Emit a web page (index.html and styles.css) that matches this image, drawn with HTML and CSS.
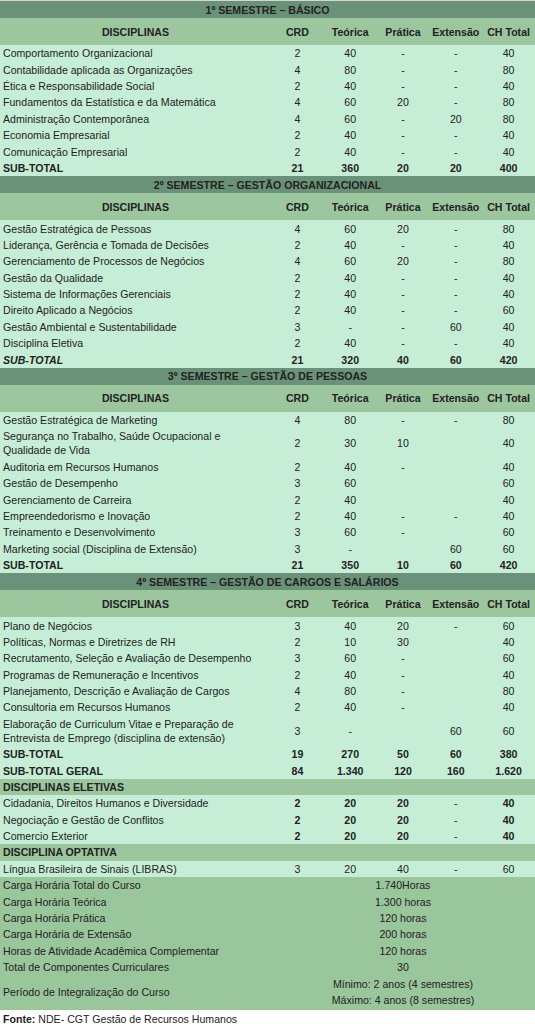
FILE: index.html
```html
<!DOCTYPE html>
<html lang="pt-BR">
<head>
    <meta charset="UTF-8">
    <meta name="viewport" content="width=device-width, initial-scale=1.0">
    <title>Matriz Curricular - Gestão de Recursos Humanos</title>
    <link rel="stylesheet" href="styles.css">
</head>
<body>
    <table class="matriz">
        <colgroup>
            <col class="c-disc">
            <col class="c-num">
            <col class="c-num">
            <col class="c-num">
            <col class="c-num">
            <col class="c-num">
        </colgroup>

        <!-- 1º semestre -->
        <tr class="title"><td colspan="6">1º SEMESTRE – BÁSICO</td></tr>
        <tr class="head"><td>DISCIPLINAS</td><td>CRD</td><td>Teórica</td><td>Prática</td><td>Extensão</td><td>CH Total</td></tr>
        <tr><td>Comportamento Organizacional</td><td>2</td><td>40</td><td>-</td><td>-</td><td>40</td></tr>
        <tr><td>Contabilidade aplicada as Organizações</td><td>4</td><td>80</td><td>-</td><td>-</td><td>80</td></tr>
        <tr><td>Ética e Responsabilidade Social</td><td>2</td><td>40</td><td>-</td><td>-</td><td>40</td></tr>
        <tr><td>Fundamentos da Estatística e da Matemática</td><td>4</td><td>60</td><td>20</td><td>-</td><td>80</td></tr>
        <tr><td>Administração Contemporânea</td><td>4</td><td>60</td><td>-</td><td>20</td><td>80</td></tr>
        <tr><td>Economia Empresarial</td><td>2</td><td>40</td><td>-</td><td>-</td><td>40</td></tr>
        <tr><td>Comunicação Empresarial</td><td>2</td><td>40</td><td>-</td><td>-</td><td>40</td></tr>
        <tr class="sub"><td>SUB-TOTAL</td><td>21</td><td>360</td><td>20</td><td>20</td><td>400</td></tr>

        <!-- 2º semestre -->
        <tr class="title"><td colspan="6">2º SEMESTRE – GESTÃO ORGANIZACIONAL</td></tr>
        <tr class="head"><td>DISCIPLINAS</td><td>CRD</td><td>Teórica</td><td>Prática</td><td>Extensão</td><td>CH Total</td></tr>
        <tr><td>Gestão Estratégica de Pessoas</td><td>4</td><td>60</td><td>20</td><td>-</td><td>80</td></tr>
        <tr><td>Liderança, Gerência e Tomada de Decisões</td><td>2</td><td>40</td><td>-</td><td>-</td><td>40</td></tr>
        <tr><td>Gerenciamento de Processos de Negócios</td><td>4</td><td>60</td><td>20</td><td>-</td><td>80</td></tr>
        <tr><td>Gestão da Qualidade</td><td>2</td><td>40</td><td>-</td><td>-</td><td>40</td></tr>
        <tr><td>Sistema de Informações Gerenciais</td><td>2</td><td>40</td><td>-</td><td>-</td><td>40</td></tr>
        <tr><td>Direito Aplicado a Negócios</td><td>2</td><td>40</td><td>-</td><td>-</td><td>60</td></tr>
        <tr><td>Gestão Ambiental e Sustentabilidade</td><td>3</td><td>-</td><td>-</td><td>60</td><td>40</td></tr>
        <tr><td>Disciplina Eletiva</td><td>2</td><td>40</td><td>-</td><td>-</td><td>40</td></tr>
        <tr class="sub"><td><i>SUB-TOTAL</i></td><td>21</td><td>320</td><td>40</td><td>60</td><td>420</td></tr>

        <!-- 3º semestre -->
        <tr class="title"><td colspan="6">3º SEMESTRE – GESTÃO DE PESSOAS</td></tr>
        <tr class="head"><td>DISCIPLINAS</td><td>CRD</td><td>Teórica</td><td>Prática</td><td>Extensão</td><td>CH Total</td></tr>
        <tr><td>Gestão Estratégica de Marketing</td><td>4</td><td>80</td><td>-</td><td>-</td><td>80</td></tr>
        <tr><td>Segurança no Trabalho, Saúde Ocupacional e<br>Qualidade de Vida</td><td>2</td><td>30</td><td>10</td><td></td><td>40</td></tr>
        <tr><td>Auditoria em Recursos Humanos</td><td>2</td><td>40</td><td>-</td><td></td><td>40</td></tr>
        <tr><td>Gestão de Desempenho</td><td>3</td><td>60</td><td></td><td></td><td>60</td></tr>
        <tr><td>Gerenciamento de Carreira</td><td>2</td><td>40</td><td></td><td></td><td>40</td></tr>
        <tr><td>Empreendedorismo e Inovação</td><td>2</td><td>40</td><td>-</td><td>-</td><td>40</td></tr>
        <tr><td>Treinamento e Desenvolvimento</td><td>3</td><td>60</td><td>-</td><td></td><td>60</td></tr>
        <tr><td>Marketing social (Disciplina de Extensão)</td><td>3</td><td>-</td><td></td><td>60</td><td>60</td></tr>
        <tr class="sub"><td>SUB-TOTAL</td><td>21</td><td>350</td><td>10</td><td>60</td><td>420</td></tr>

        <!-- 4º semestre -->
        <tr class="title"><td colspan="6">4º SEMESTRE – GESTÃO DE CARGOS E SALÁRIOS</td></tr>
        <tr class="head"><td>DISCIPLINAS</td><td>CRD</td><td>Teórica</td><td>Prática</td><td>Extensão</td><td>CH Total</td></tr>
        <tr><td>Plano de Negócios</td><td>3</td><td>40</td><td>20</td><td>-</td><td>60</td></tr>
        <tr><td>Políticas, Normas e Diretrizes de RH</td><td>2</td><td>10</td><td>30</td><td></td><td>40</td></tr>
        <tr><td>Recrutamento, Seleção e Avaliação de Desempenho</td><td>3</td><td>60</td><td>-</td><td></td><td>60</td></tr>
        <tr><td>Programas de Remuneração e Incentivos</td><td>2</td><td>40</td><td>-</td><td></td><td>40</td></tr>
        <tr><td>Planejamento, Descrição e Avaliação de Cargos</td><td>4</td><td>80</td><td>-</td><td></td><td>80</td></tr>
        <tr><td>Consultoria em Recursos Humanos</td><td>2</td><td>40</td><td>-</td><td></td><td>40</td></tr>
        <tr><td>Elaboração de Curriculum Vitae e Preparação de<br>Entrevista de Emprego (disciplina de extensão)</td><td>3</td><td>-</td><td></td><td>60</td><td>60</td></tr>
        <tr class="sub"><td>SUB-TOTAL</td><td>19</td><td>270</td><td>50</td><td>60</td><td>380</td></tr>
        <tr class="sub"><td>SUB-TOTAL GERAL</td><td>84</td><td>1.340</td><td>120</td><td>160</td><td>1.620</td></tr>

        <!-- eletivas / optativa -->
        <tr class="group"><td colspan="6">DISCIPLINAS ELETIVAS</td></tr>
        <tr class="elet"><td>Cidadania, Direitos Humanos e Diversidade</td><td>2</td><td>20</td><td>20</td><td>-</td><td>40</td></tr>
        <tr class="elet"><td>Negociação e Gestão de Conflitos</td><td>2</td><td>20</td><td>20</td><td>-</td><td>40</td></tr>
        <tr class="elet"><td>Comercio Exterior</td><td>2</td><td>20</td><td>20</td><td>-</td><td>40</td></tr>
        <tr class="group"><td colspan="6">DISCIPLINA OPTATIVA</td></tr>
        <tr><td>Língua Brasileira de Sinais (LIBRAS)</td><td>3</td><td>20</td><td>40</td><td>-</td><td>60</td></tr>

        <!-- resumo -->
        <tr class="resumo"><td>Carga Horária Total do Curso</td><td colspan="5">1.740Horas</td></tr>
        <tr class="resumo"><td>Carga Horária Teórica</td><td colspan="5">1.300 horas</td></tr>
        <tr class="resumo"><td>Carga Horária Prática</td><td colspan="5">120 horas</td></tr>
        <tr class="resumo"><td>Carga Horária de Extensão</td><td colspan="5">200 horas</td></tr>
        <tr class="resumo"><td>Horas de Atividade Acadêmica Complementar</td><td colspan="5">120 horas</td></tr>
        <tr class="resumo"><td>Total de Componentes Curriculares</td><td colspan="5">30</td></tr>
        <tr class="resumo periodo"><td>Período de Integralização do Curso</td><td colspan="5">Mínimo: 2 anos (4 semestres)<br>Máximo: 4 anos (8 semestres)</td></tr>

        <tr class="fonte"><td colspan="6"><b>Fonte:</b> NDE- CGT Gestão de Recursos Humanos</td></tr>
    </table>
</body>
</html>
```

FILE: styles.css
```css
body {
    margin: 0;
    background: #ffffff;
    font-family: "Liberation Sans", Arial, sans-serif;
    font-size: 10.6px;
    color: #222222;
}
.matriz {
    width: 535px;
    border-collapse: collapse;
    table-layout: fixed;
    border-top: 1px solid #d6d6d6;
    border-bottom: 1px solid #d6d6d6;
    background: #c6eed6;
}
.c-disc {
    width: 271px;
}
.c-num {
    width: 52.8px;
}
.matriz td {
    padding: 1.2px 0;
    line-height: 14px;
    text-align: center;
    vertical-align: middle;
    white-space: nowrap;
}
.matriz td:first-child {
    text-align: left;
    padding-left: 3px;
}
.title td {
    background: #6a9278;
    font-weight: bold;
    text-align: center !important;
    padding-left: 0 !important;
    padding-top: 1.6px;
    padding-bottom: 1.6px;
}
.head td {
    background: #9cc69e;
    font-weight: bold;
    height: 24.6px;
}
.head td:first-child {
    text-align: center;
    padding-left: 0;
}
.sub td {
    font-weight: bold;
}
.group td {
    background: #9cc69e;
    font-weight: bold;
}
.elet td {
    font-weight: bold;
}
.elet td:nth-child(5) {
    font-weight: normal;
}
.elet td:first-child {
    font-weight: normal;
}
.resumo td {
    background: #99c69b;
    padding: 1.2px 0;
}
.periodo td {
    line-height: 16px;
}
.fonte td {
    background: #ffffff;
    padding: 2px 0;
}
```
